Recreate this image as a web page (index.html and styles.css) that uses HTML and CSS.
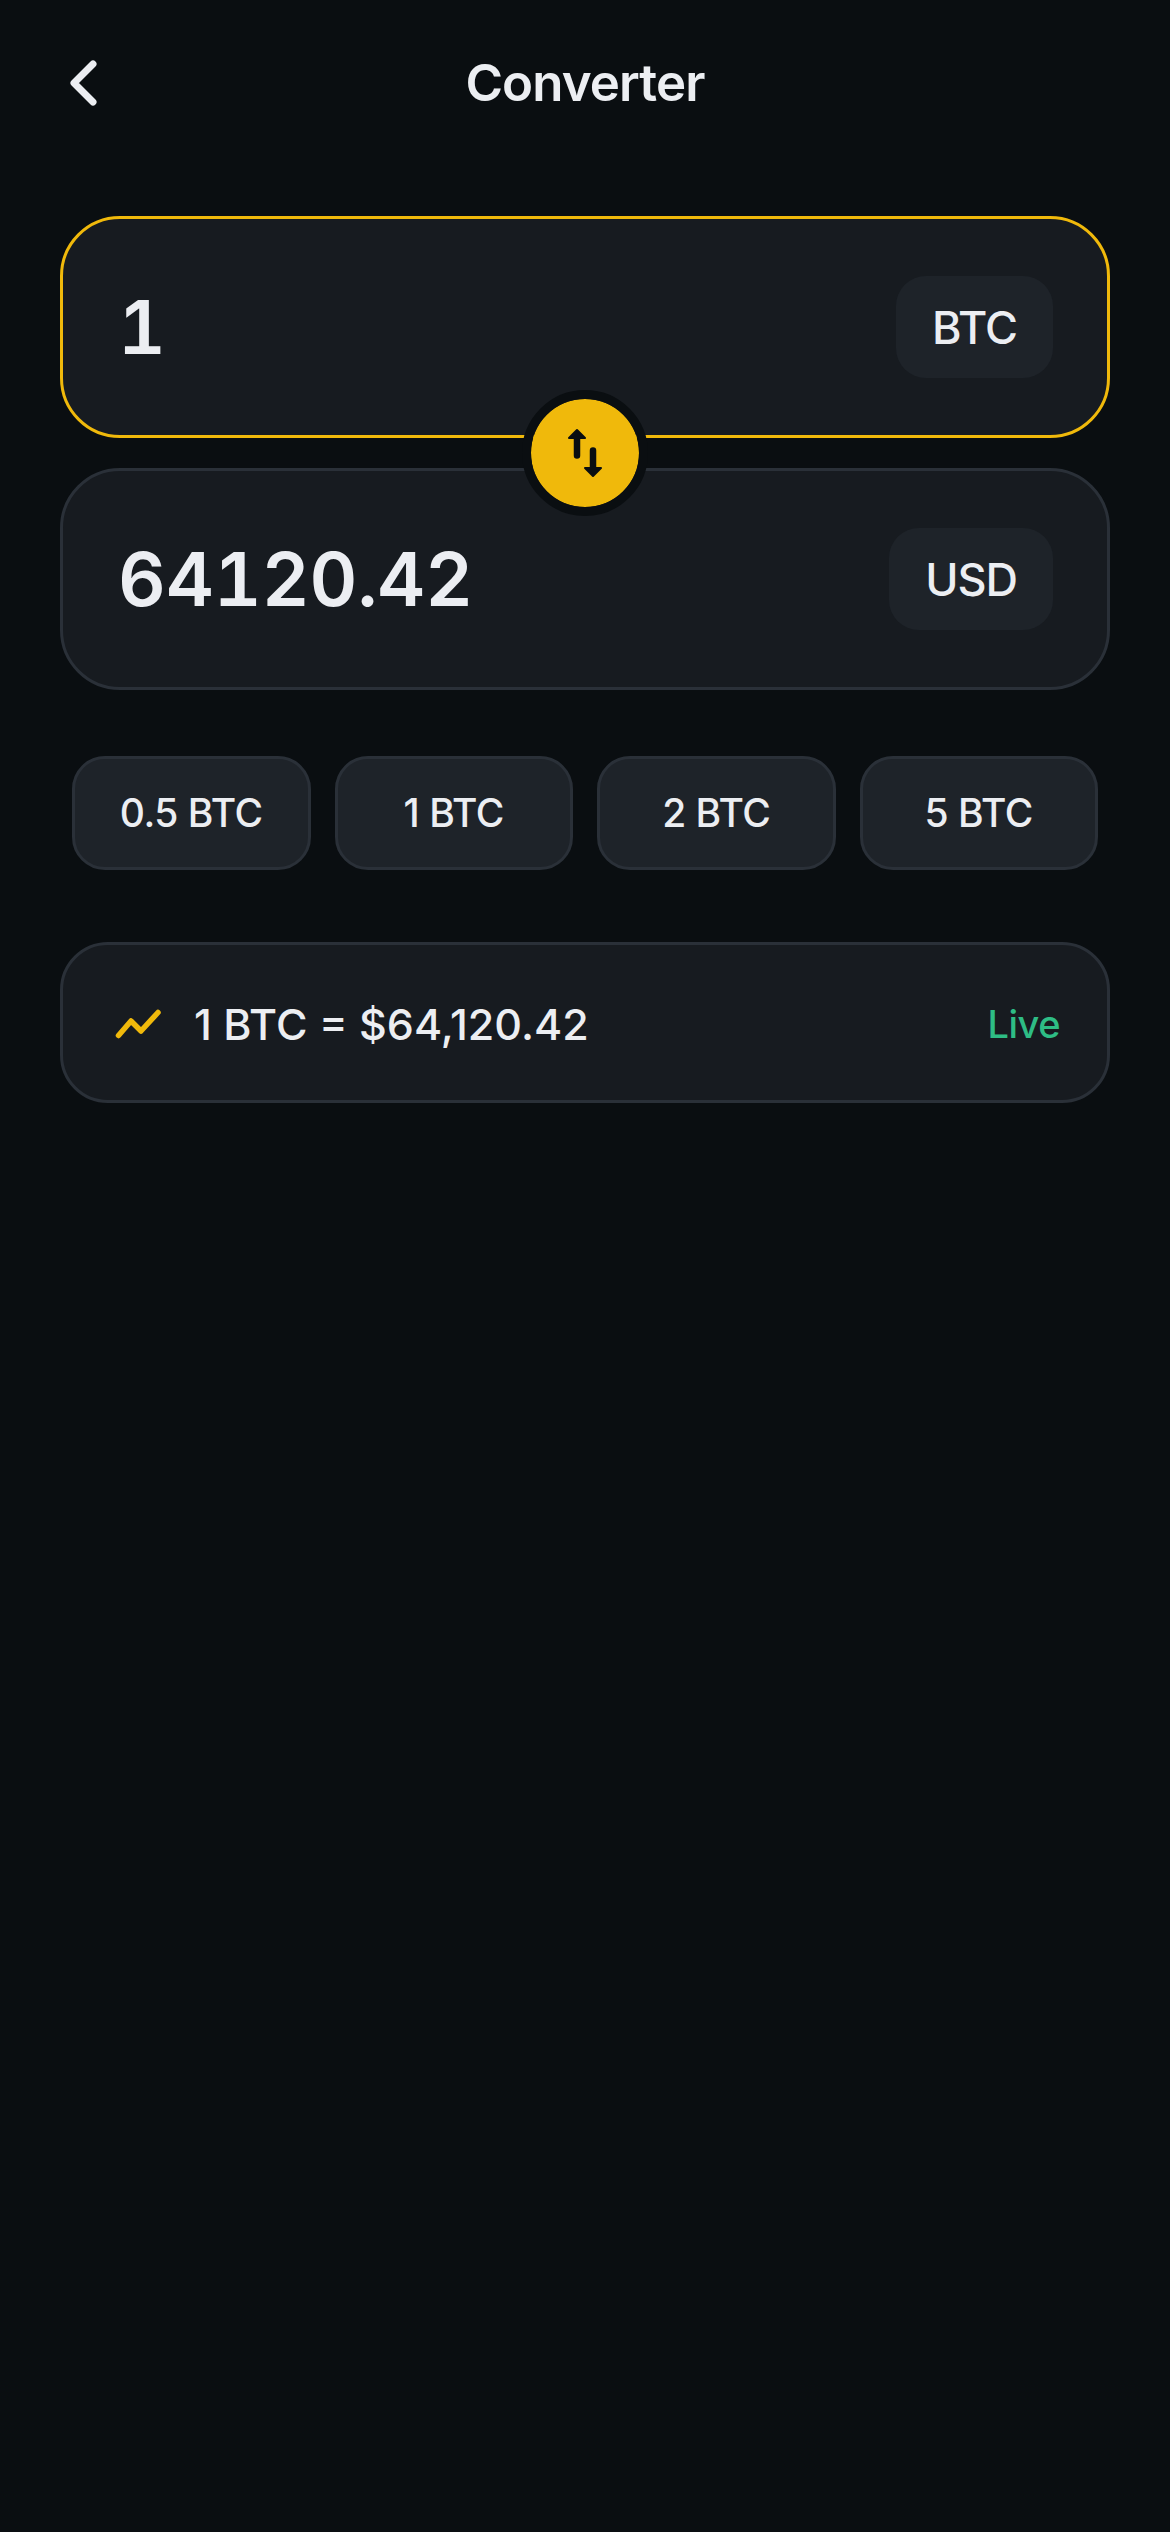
FILE: index.html
```html
<!DOCTYPE html>
<html lang="en">
  <head>
    <meta charset="UTF-8" />
    <meta name="viewport" content="width=device-width, initial-scale=1.0" />
    <title>Converter</title>
    <link rel="stylesheet" href="styles.css">
  </head>
  <body>
    <header class="top-bar">
      <svg class="back-icon" width="36" height="54" viewBox="0 0 36 54">
        <path d="M27 8 L8 27 L27 46" />
      </svg>
      <h1 class="title">Converter</h1>
    </header>

    <main class="content">
      <section class="fields">
        <div class="field field-active">
          <span class="amount">1</span>
          <span class="unit">BTC</span>
        </div>
        <div class="field">
          <span class="amount">64120.42</span>
          <span class="unit">USD</span>
        </div>
        <button class="swap">
          <svg width="60" height="60" viewBox="0 0 60 60">
            <path class="swap-shaft" d="M22 14 V32.5 M38 27.5 V46" />
            <path class="swap-head" d="M22 7 L30 15 H14 Z M38 53 L30 45 H46 Z" />
          </svg>
        </button>
      </section>

      <section class="presets">
        <button class="preset">0.5 BTC</button>
        <button class="preset">1 BTC</button>
        <button class="preset">2 BTC</button>
        <button class="preset">5 BTC</button>
      </section>

      <section class="rate">
        <svg class="rate-icon" width="48" height="34" viewBox="0 0 48 34">
          <path d="M4.5 28.5 L17 14 L27 24 L44 5.5" />
        </svg>
        <span class="rate-text">1 BTC = $64,120.42</span>
        <span class="rate-live">Live</span>
      </section>
    </main>
  </body>
</html>
```

FILE: styles.css
```css
* {
  box-sizing: border-box;
}

body {
  margin: 0;
  min-height: 2532px;
  background-color: #0a0e11;
  color: #eceef2;
  font-family: Inter, "Noto Sans", sans-serif;
}

.top-bar {
  position: relative;
  height: 216px;
  padding-top: 56px;
  text-align: center;
}

.back-icon {
  position: absolute;
  left: 66px;
  top: 56px;
}

.back-icon path {
  fill: none;
  stroke: #eceef2;
  stroke-width: 7;
  stroke-linecap: round;
  stroke-linejoin: round;
}

.title {
  margin: 0;
  font-size: 51px;
  font-weight: 600;
  letter-spacing: -0.9px;
  line-height: 54px;
}

.content {
  padding: 0 60px;
}

.fields {
  position: relative;
  display: flex;
  flex-direction: column;
  gap: 30px;
}

.field {
  display: flex;
  align-items: center;
  justify-content: space-between;
  height: 222px;
  padding: 0 54px 0 55px;
  background-color: #171b20;
  border: 3px solid #2a3038;
  border-radius: 60px;
}

.field-active {
  border-color: #f0b90b;
}

.amount {
  font-size: 74px;
  font-weight: 600;
  font-feature-settings: "tnum";
}

.unit {
  display: flex;
  align-items: center;
  height: 102px;
  padding: 0 36px;
  background-color: #1e2329;
  border-radius: 30px;
  font-size: 45px;
  font-weight: 500;
  letter-spacing: -1px;
}

.swap {
  position: absolute;
  left: 462px;
  top: 174px;
  display: flex;
  align-items: center;
  justify-content: center;
  width: 126px;
  height: 126px;
  padding: 0;
  background-color: #f0b90b;
  background-clip: padding-box;
  border: 9px solid #0a0e11;
  border-radius: 50%;
}

.swap-shaft {
  fill: none;
  stroke: #0a0e11;
  stroke-width: 6.5;
  stroke-linecap: round;
}

.swap-head {
  fill: #0a0e11;
  stroke: #0a0e11;
  stroke-width: 2;
  stroke-linejoin: round;
}

.presets {
  display: grid;
  grid-template-columns: repeat(4, 1fr);
  gap: 24px;
  margin-top: 66px;
  padding: 0 12px;
}

.preset {
  height: 114px;
  padding: 0 0 2px;
  background-color: #1e2329;
  border: 3px solid #2a3038;
  border-radius: 33px;
  color: #eceef2;
  font-family: inherit;
  font-size: 39px;
  font-weight: 500;
  letter-spacing: -0.5px;
}

.rate {
  display: flex;
  align-items: center;
  height: 161px;
  margin-top: 72px;
  padding: 2px 47px 0 51px;
  background-color: #171b20;
  border: 3px solid #2a3038;
  border-radius: 48px;
}

.rate-icon {
  flex-shrink: 0;
}

.rate-icon path {
  fill: none;
  stroke: #f0b90b;
  stroke-width: 5.5;
  stroke-linecap: round;
  stroke-linejoin: round;
}

.rate-text {
  flex: 1;
  margin-left: 32px;
  font-size: 43px;
  font-weight: 500;
}

.rate-live {
  color: #2ebd85;
  font-size: 38px;
  font-weight: 500;
  letter-spacing: -0.5px;
}
```
